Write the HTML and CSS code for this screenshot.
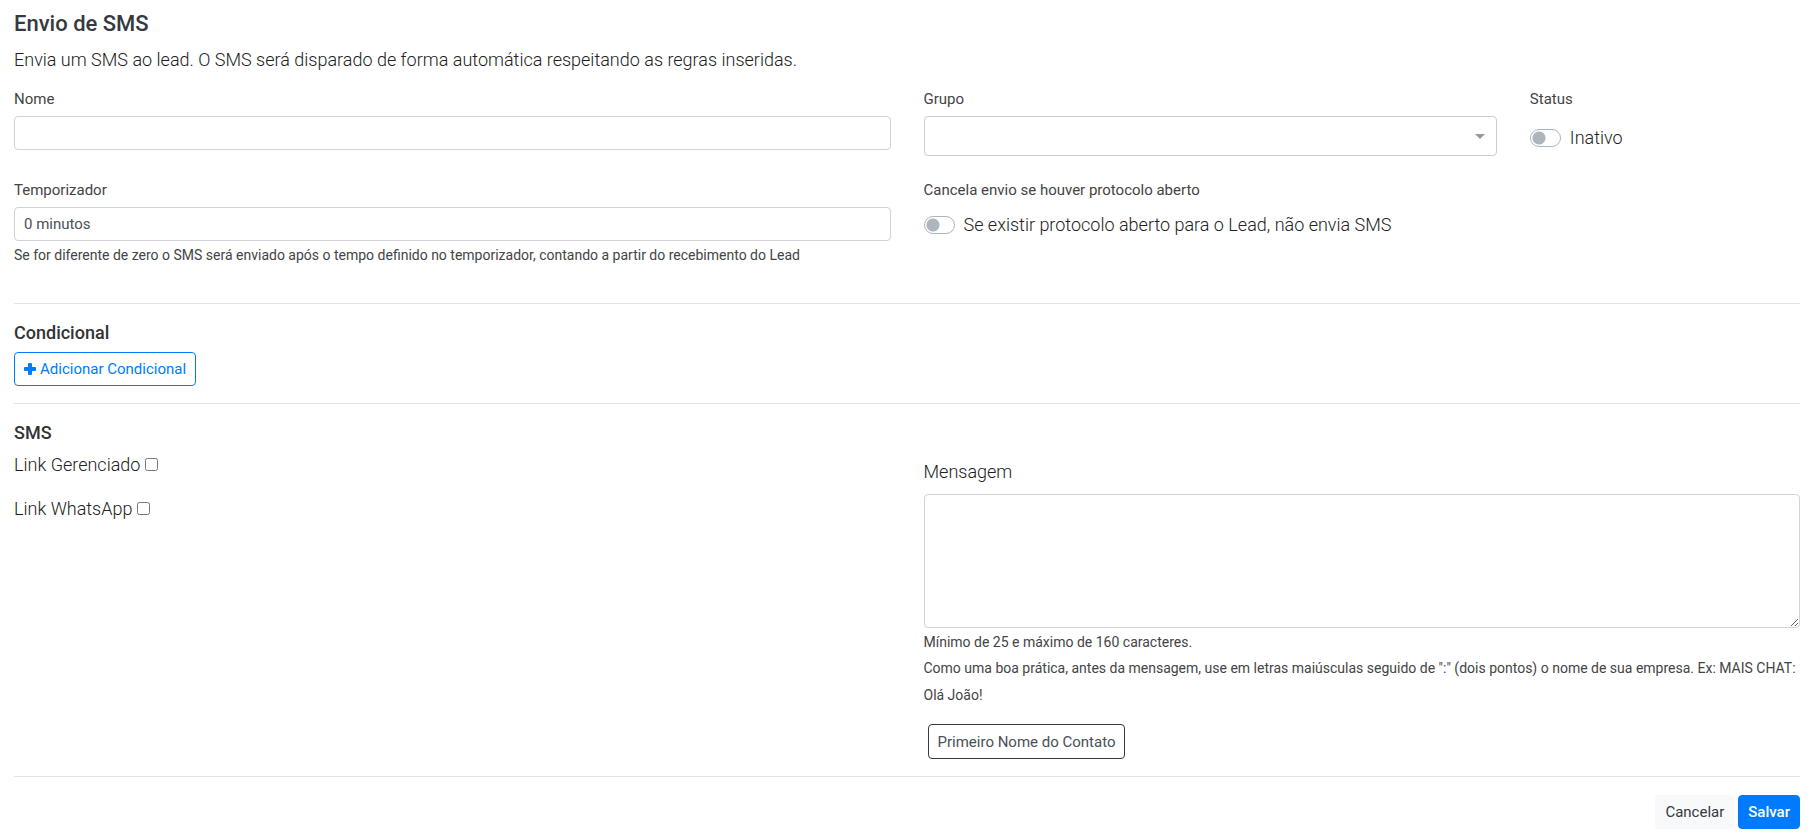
FILE: index.html
```html
<!DOCTYPE html>
<html lang="pt-BR">
<head>
  <meta charset="utf-8">
  <meta name="viewport" content="width=device-width, initial-scale=1">
  <title>Envio de SMS</title>
  <link rel="stylesheet" href="styles.css">
</head>
<body>
  <form class="page">
    <header class="intro">
      <h1 class="page-title">Envio de SMS</h1>
      <p class="lead">Envia um SMS ao lead. O SMS será disparado de forma automática respeitando as regras inseridas.</p>
    </header>

    <div class="grid grid-first">
      <div class="col-6">
        <label class="field-label" for="nome">Nome</label>
        <input class="control" id="nome" type="text">
      </div>
      <div class="col-4">
        <label class="field-label" for="grupo">Grupo</label>
        <div class="select-wrap">
          <select class="control control-select" id="grupo"><option></option></select>
          <svg class="caret" viewBox="0 0 10 5" aria-hidden="true"><path d="M0 0h10L5 5z"/></svg>
        </div>
      </div>
      <div class="col-2">
        <span class="field-label">Status</span>
        <label class="switch switch-tall"><input class="switch-input" type="checkbox" role="switch"><span>Inativo</span></label>
      </div>
    </div>

    <div class="grid grid-second">
      <div class="col-6">
        <label class="field-label" for="temporizador">Temporizador</label>
        <input class="control" id="temporizador" type="text" value="0 minutos">
        <small class="help">Se for diferente de zero o SMS será enviado após o tempo definido no temporizador, contando a partir do recebimento do Lead</small>
      </div>
      <div class="col-6">
        <span class="field-label">Cancela envio se houver protocolo aberto</span>
        <label class="switch"><input class="switch-input" type="checkbox" role="switch"><span>Se existir protocolo aberto para o Lead, não envia SMS</span></label>
      </div>
    </div>

    <section class="section">
      <h2 class="section-title">Condicional</h2>
      <button class="btn btn-outline-primary" type="button">
        <svg class="plus" viewBox="0 0 12 12" aria-hidden="true"><path d="M5 0h2q1 0 1 1v3h3q1 0 1 1v2q0 1-1 1H8v3q0 1-1 1H5q-1 0-1-1V8H1Q0 8 0 7V5q0-1 1-1h3V1q0-1 1-1z"/></svg>
        Adicionar Condicional
      </button>
    </section>

    <section class="section">
      <h2 class="section-title">SMS</h2>
      <div class="grid">
        <div class="col-6 links">
          <label class="check">Link Gerenciado <input class="check-input" type="checkbox"></label>
          <label class="check">Link WhatsApp <input class="check-input" type="checkbox"></label>
        </div>
        <div class="col-6 message">
          <label class="message-label" for="mensagem">Mensagem</label>
          <textarea class="control control-area" id="mensagem"></textarea>
          <small class="help">Mínimo de 25 e máximo de 160 caracteres.</small>
          <small class="help help-tall">Como uma boa prática, antes da mensagem, use em letras maiúsculas seguido de ":" (dois pontos) o nome de sua empresa. Ex: MAIS CHAT: Olá João!</small>
          <button class="btn btn-outline-dark" type="button">Primeiro Nome do Contato</button>
        </div>
      </div>
    </section>

    <footer class="actions">
      <button class="btn btn-light" type="button">Cancelar</button>
      <button class="btn btn-primary" type="submit">Salvar</button>
    </footer>
  </form>
</body>
</html>
```
FILE: styles.css
```css
*,
*::before,
*::after {
  box-sizing: border-box;
}

body {
  margin: 0;
  background: #fff;
  color: #212121;
  font-family: Roboto, "Liberation Sans", sans-serif;
  font-size: 18px;
  font-weight: 300;
  line-height: 26px;
}

.page {
  padding: 11px 12px 8px 14px;
}

.page-title {
  margin: 0 0 10px;
  color: #343a40;
  font-size: 22px;
  font-weight: 500;
  line-height: 26px;
}

.lead {
  margin: 0;
}

.grid {
  display: grid;
  grid-template-columns: repeat(12, minmax(0, 1fr));
  column-gap: 33px;
}

.grid-first {
  margin-top: 14px;
}

.grid-second {
  margin-top: 22px;
}

.col-6 {
  grid-column: span 6;
}

.col-4 {
  grid-column: span 4;
}

.col-2 {
  grid-column: span 2;
}

.field-label {
  display: block;
  margin-bottom: 5px;
  color: #444;
  font-size: 15px;
  font-weight: 400;
  line-height: 24px;
}

.control {
  display: block;
  width: 100%;
  height: 34px;
  padding: 4px 9px;
  border: 1px solid #ced4da;
  border-radius: 4px;
  background: #fff;
  color: #495057;
  font: inherit;
  font-size: 15px;
  font-weight: 400;
  line-height: 24px;
}

.select-wrap {
  display: grid;
  align-items: center;
}

.control-select {
  grid-area: 1 / 1;
  height: 40px;
  border-color: #ccc;
  appearance: none;
}

.caret {
  grid-area: 1 / 1;
  justify-self: end;
  width: 10px;
  height: 5px;
  margin-right: 12px;
  fill: #999;
  pointer-events: none;
}

.switch {
  display: flex;
  align-items: center;
  gap: 9px;
  padding-top: 5px;
}

.switch-tall {
  padding-top: 9px;
}

.switch-input {
  flex: none;
  width: 31px;
  height: 18px;
  margin: 0;
  border: 1px solid #adb5bd;
  border-radius: 9px;
  background: radial-gradient(circle at 8px 8px, #adb5bd 6px, #fff 7px);
  appearance: none;
}

.help {
  display: block;
  margin-top: 4px;
  color: #444;
  font-size: 14px;
  font-weight: 400;
  line-height: 20px;
}

.help-tall {
  margin-top: 3px;
  line-height: 27px;
}

.section {
  margin-top: 17px;
  padding-top: 16px;
  border-top: 1px solid #e3e4e5;
}

.grid-second + .section {
  margin-top: 38px;
}

.section-title {
  margin: 0 0 6px;
  color: #333;
  font-size: 18px;
  font-weight: 500;
  line-height: 26px;
}

.btn {
  display: inline-flex;
  align-items: center;
  gap: 4px;
  height: 34px;
  padding: 4px 9px;
  border: 1px solid transparent;
  border-radius: 4px;
  font: inherit;
  font-size: 15px;
  font-weight: 400;
  line-height: 24px;
}

.btn-outline-primary {
  border-color: #007bff;
  background: #fff;
  color: #007bff;
}

.plus {
  width: 12px;
  height: 12px;
  fill: currentColor;
}

.btn-outline-dark {
  height: 35px;
  margin: 15px 4px 0;
  border-color: #343a40;
  background: #fff;
  color: #495057;
}

.btn-light {
  background: #f8f9fa;
  color: #343a40;
}

.btn-primary {
  border-color: #007bff;
  background: #007bff;
  color: #fff;
  font-weight: 500;
}

.links {
  display: flex;
  flex-direction: column;
  gap: 18px;
}

.check-input {
  width: 13px;
  height: 13px;
  margin: 0;
}

.message {
  padding-top: 7px;
}

.message-label {
  display: block;
  margin-bottom: 9px;
}

.control-area {
  height: 134px;
}

.actions {
  display: flex;
  justify-content: flex-end;
  gap: 4px;
  margin-top: 17px;
  padding-top: 18px;
  border-top: 1px solid #e3e4e5;
}
```
